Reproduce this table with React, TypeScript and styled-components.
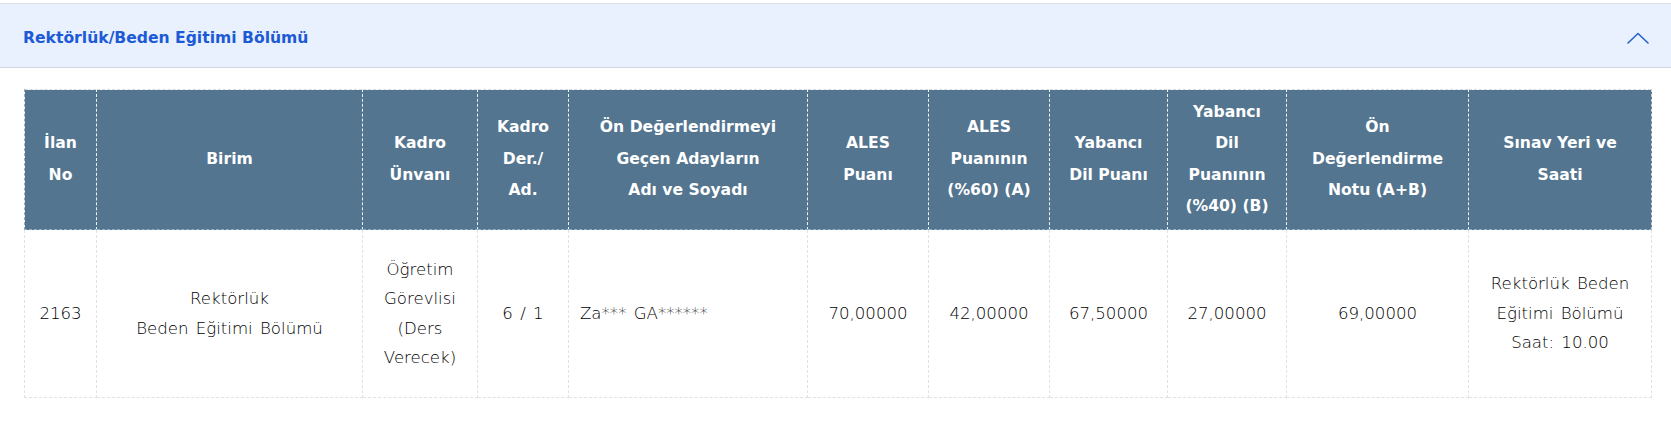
import React from "react";
import styled, { createGlobalStyle } from "styled-components";

const GlobalStyle = createGlobalStyle`
  html, body { margin: 0; padding: 0; background: #ffffff; }
  body { font-family: "DejaVu Sans", "Liberation Sans", sans-serif; }
`;

const Page = styled.div`
  padding-top: 3px;
  width: 1671px;
`;

const PanelHeader = styled.div`
  height: 63px;
  display: flex;
  align-items: center;
  justify-content: space-between;
  padding: 0 22px 0 23px;
  background: #e8f1fd;
  border-top: 1px solid #dde2e8;
  border-bottom: 1px solid #cfd6de;
`;

const Title = styled.h3`
  margin: 0;
  font-family: "DejaVu Sans", sans-serif;
  font-weight: 700;
  font-size: 15.6px;
  color: #1d5ad6;
  padding-top: 5px;
`;

const Toggle = styled.button`
  border: 0;
  background: transparent;
  padding: 0;
  width: 22px;
  height: 14px;
  display: flex;
  align-items: center;
  justify-content: center;
  margin-top: 4px;
  cursor: pointer;
`;

const PanelBody = styled.div`
  padding: 21px 20px 20px 24px;
`;

const Table = styled.table`
  width: 1627px;
  table-layout: fixed;
  border-collapse: collapse;
  border: 1px dashed #d5dbe1;
`;

const Col = styled.col<{ $w: number }>`
  width: ${(p) => p.$w}px;
`;

const HeadRow = styled.tr`
  height: 140px;
`;

const HeadCell = styled.th`
  background: #53758f;
  color: #ffffff;
  font-family: "DejaVu Sans", sans-serif;
  font-weight: 700;
  font-size: 15.6px;
  line-height: 31.5px;
  text-align: center;
  vertical-align: middle;
  white-space: nowrap;
  padding: 0;
  border-left: 1px dashed rgba(255, 255, 255, 0.9);
  border-right: 1px dashed rgba(255, 255, 255, 0.9);
  border-bottom: 1px dashed #8fb0cc;
  &:first-child { border-left: 1px dashed #9aaab8; }
  &:last-child { border-right: 1px dashed #c9d3dc; }
`;

const BodyRow = styled.tr`
  height: 168px;
`;

const BodyCell = styled.td<{ $left?: boolean }>`
  color: #000000;
  font-family: "DejaVu Sans", sans-serif;
  font-weight: 300;
  font-size: 16.6px;
  line-height: 29.5px;
  word-spacing: 2px;
  text-align: ${(p) => (p.$left ? "left" : "center")};
  padding: ${(p) => (p.$left ? "0 0 0 11px" : "0")};
  vertical-align: middle;
  white-space: nowrap;
  border: 1px dashed #dde3e8;
`;

const widths = [72, 266, 115, 91, 239, 121, 121, 118, 119, 182, 183];

const headers: string[][] = [
  ["İlan", "No"],
  ["Birim"],
  ["Kadro", "Ünvanı"],
  ["Kadro", "Der./", "Ad."],
  ["Ön Değerlendirmeyi", "Geçen Adayların", "Adı ve Soyadı"],
  ["ALES", "Puanı"],
  ["ALES", "Puanının", "(%60) (A)"],
  ["Yabancı", "Dil Puanı"],
  ["Yabancı", "Dil", "Puanının", "(%40) (B)"],
  ["Ön", "Değerlendirme", "Notu (A+B)"],
  ["Sınav Yeri ve", "Saati"],
];

const row: { lines: string[]; left?: boolean }[] = [
  { lines: ["2163"] },
  { lines: ["Rektörlük", "Beden Eğitimi Bölümü"] },
  { lines: ["Öğretim", "Görevlisi", "(Ders", "Verecek)"] },
  { lines: ["6 / 1"] },
  { lines: ["Za*** GA******"], left: true },
  { lines: ["70,00000"] },
  { lines: ["42,00000"] },
  { lines: ["67,50000"] },
  { lines: ["27,00000"] },
  { lines: ["69,00000"] },
  { lines: ["Rektörlük Beden", "Eğitimi Bölümü", "Saat: 10.00"] },
];

const Lines: React.FC<{ lines: string[] }> = ({ lines }) => (
  <>
    {lines.map((l, i) => (
      <React.Fragment key={i}>
        {i > 0 && <br />}
        {l}
      </React.Fragment>
    ))}
  </>
);

export default function App() {
  return (
    <>
      <GlobalStyle />
      <Page>
        <PanelHeader>
          <Title>Rektörlük/Beden Eğitimi Bölümü</Title>
          <Toggle aria-label="Daralt">
            <svg width="22" height="12" viewBox="0 0 22 12" fill="none">
              <polyline
                points="1,11 11,1.5 21,11"
                stroke="#2a62cc"
                strokeWidth="1.6"
                strokeLinecap="round"
                strokeLinejoin="round"
              />
            </svg>
          </Toggle>
        </PanelHeader>
        <PanelBody>
          <Table>
            <colgroup>
              {widths.map((w, i) => (
                <Col key={i} $w={w} />
              ))}
            </colgroup>
            <thead>
              <HeadRow>
                {headers.map((h, i) => (
                  <HeadCell key={i}>
                    <Lines lines={h} />
                  </HeadCell>
                ))}
              </HeadRow>
            </thead>
            <tbody>
              <BodyRow>
                {row.map((c, i) => (
                  <BodyCell key={i} $left={c.left}>
                    <Lines lines={c.lines} />
                  </BodyCell>
                ))}
              </BodyRow>
            </tbody>
          </Table>
        </PanelBody>
      </Page>
    </>
  );
}
